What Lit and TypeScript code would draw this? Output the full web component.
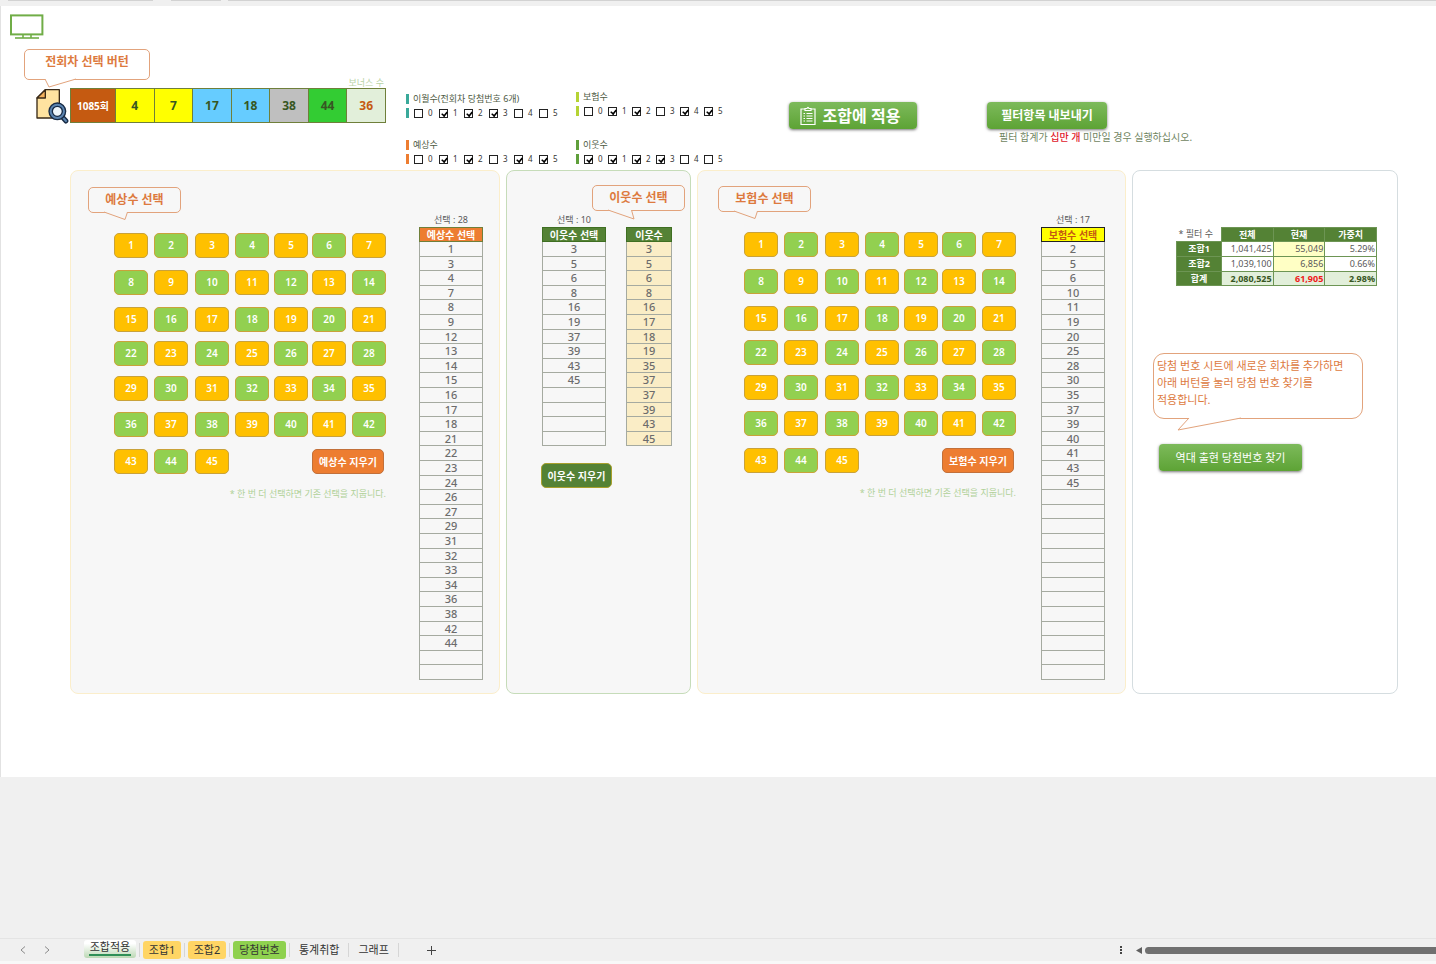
import { LitElement, html, svg, css, nothing } from "lit";
import { customElement, state } from "lit/decorators.js";
import { classMap } from "lit/directives/class-map.js";

type CheckGroup = { id: string; label: string; tone: string; on: number[] };

const DRAW = [
  { n: 4, tone: "yellow" },
  { n: 7, tone: "yellow" },
  { n: 17, tone: "blue" },
  { n: 18, tone: "blue" },
  { n: 38, tone: "gray" },
  { n: 44, tone: "green" },
  { n: 36, tone: "bonus" },
];

const CHECK_COLUMNS: CheckGroup[][] = [
  [
    { id: "carry", label: "이월수(전회차 당첨번호 6개)", tone: "teal", on: [1, 2, 3] },
    { id: "expect", label: "예상수", tone: "orange", on: [1, 2, 4, 5] },
  ],
  [
    { id: "insure", label: "보험수", tone: "lime", on: [1, 2, 4, 5] },
    { id: "near", label: "이웃수", tone: "leaf", on: [0, 1, 2, 3] },
  ],
];

const NEIGHBOURS = [3, 5, 6, 8, 16, 17, 18, 19, 35, 37, 37, 39, 43, 45];
const BALLS = Array.from({ length: 45 }, (_, i) => i + 1);

@customElement("app-root")
export class AppRoot extends LitElement {
  @state() private expected: number[] = [
    1, 3, 4, 7, 8, 9, 12, 13, 14, 15, 16, 17, 18, 21, 22, 23, 24, 26, 27, 29, 31, 32, 33, 34, 36, 38, 42, 44,
  ];
  @state() private insured: number[] = [2, 5, 6, 10, 11, 19, 20, 25, 28, 30, 35, 37, 39, 40, 41, 43, 45];
  @state() private near: number[] = [3, 5, 6, 8, 16, 19, 37, 39, 43, 45];

  static styles = css`
    :host {
      display: flex;
      flex-direction: column;
      min-height: 100vh;
      background: #f0f0f0;
      font-family: "Noto Sans", "Noto Sans CJK KR", sans-serif;
      font-size: 10px;
      line-height: 14px;
      color: #595959;
    }
    * {
      box-sizing: border-box;
    }
    button {
      font: inherit;
      padding: 0;
      cursor: pointer;
    }
    table {
      border-collapse: collapse;
      table-layout: fixed;
    }
    th,
    td {
      padding: 0;
    }
    .strip {
      display: flex;
      gap: 7px;
      height: 6px;
      padding-left: 8px;
      background: #f0f0f0;
    }
    .strip span {
      height: 1px;
      background: #d2d2d2;
    }
    .strip .s1 {
      width: 145px;
      margin-right: 11px;
    }
    .strip .s2 {
      width: 50px;
    }
    .strip .s3 {
      flex: 1;
    }
    .sheet {
      min-height: 771px;
      padding-top: 8px;
      background: #fff;
      border-left: 1px solid #e2e2e2;
    }
    .monitor {
      display: block;
      margin-left: 8px;
    }
    .head {
      display: flex;
      align-items: stretch;
      height: 131px;
      padding-left: 23px;
    }
    .last {
      width: 382px;
      padding-top: 10px;
    }
    .lastTop {
      display: flex;
      justify-content: space-between;
      align-items: flex-end;
      width: 360px;
      height: 39px;
    }
    .bonusLabel {
      font-size: 9px;
      line-height: 10px;
      color: #b9d3a6;
    }
    .lastRow {
      display: flex;
      align-items: flex-start;
      padding-left: 12px;
    }
    .search {
      border: 0;
      background: none;
      width: 34px;
      height: 36px;
    }
    .search svg {
      display: block;
    }
    .draw {
      width: 316px;
      height: 35px;
    }
    .draw th,
    .draw td {
      border: 1px solid #6f7f3a;
      text-align: center;
      font-weight: 700;
      color: #375623;
      font-size: 12px;
    }
    .draw th {
      width: 45px;
      background: #c55a11;
      color: #fff;
      font-size: 10px;
    }
    .draw .yellow {
      background: #ffff00;
    }
    .draw .blue {
      background: #66ccff;
    }
    .draw .gray {
      background: #bfbfbf;
    }
    .draw .green {
      background: #33cc33;
    }
    .draw .bonus {
      background: #e2efda;
      color: #c55a11;
    }

    .callout {
      position: relative;
      width: 93px;
      height: 26px;
      border: 1px solid #e2a37c;
      border-radius: 5px;
      background: var(--fill, #f7f7f7);
      color: #dd7a3e;
      font-size: 12px;
      font-weight: 700;
      line-height: 24px;
      text-align: center;
    }
    .callout.wide {
      --fill: #fff;
      width: 126px;
      height: 31px;
      margin-bottom: 8px;
    }
    .tail {
      position: absolute;
      top: 100%;
      left: 15px;
      overflow: visible;
    }
    .tail path {
      fill: var(--fill, #f7f7f7);
      stroke: #e2a37c;
    }

    .checks {
      display: flex;
      flex-direction: column;
      justify-content: flex-end;
      padding-bottom: 6px;
    }
    .checks.first {
      width: 170px;
      gap: 22px;
    }
    .checks.second {
      width: 213px;
      gap: 24px;
    }
    fieldset {
      border: 0;
      margin: 0;
      padding: 0;
      min-width: 0;
      display: flex;
      flex-direction: column;
      gap: 4px;
    }
    .line {
      display: flex;
      align-items: center;
      height: 10px;
      padding-left: 4px;
      border-left: 3px solid var(--tone);
      font-size: 9px;
      line-height: 10px;
      white-space: nowrap;
      color: #4d5a43;
    }
    .teal {
      --tone: #3aa99a;
    }
    .orange {
      --tone: #ed7d31;
    }
    .lime {
      --tone: #b5d334;
    }
    .leaf {
      --tone: #5f9f3b;
    }
    .boxes {
      padding-left: 5px;
      color: #333;
    }
    .boxes label {
      display: flex;
      align-items: center;
      gap: 5px;
      width: 25px;
      font-size: 8px;
    }
    .second .boxes label {
      width: 24px;
    }
    .boxes input {
      appearance: none;
      position: relative;
      flex: none;
      width: 9px;
      height: 9px;
      margin: 0;
      border: 1px solid #222;
      background: #fff;
    }
    .boxes input:checked::after {
      content: "";
      position: absolute;
      left: 2px;
      top: 0;
      width: 3px;
      height: 5px;
      border: solid #000;
      border-width: 0 2px 2px 0;
      transform: rotate(40deg) scale(0.8);
    }
    .action {
      display: flex;
      align-items: center;
      justify-content: center;
      border: 0;
      border-radius: 4px;
      background: linear-gradient(#7dba5b, #5da335);
      box-shadow: 0 1px 3px rgba(0, 0, 0, 0.55);
      color: #fff;
      height: 27px;
      white-space: nowrap;
    }
    .apply {
      gap: 7px;
      width: 128px;
      padding-right: 6px;
      font-size: 16px;
      font-weight: 700;
    }
    .applyBox {
      padding-top: 63px;
      margin-right: 70px;
    }
    .exportBox {
      padding-top: 63px;
    }
    .export {
      width: 120px;
      font-size: 12px;
      font-weight: 700;
    }
    .hint {
      margin: 1px 0 0 12px;
      font-size: 10px;
      color: #70855f;
      white-space: nowrap;
    }
    .hint b {
      font-weight: 500;
      color: #e0202c;
    }

    .panels {
      display: grid;
      grid-template-columns: 430fr 185fr 429fr 266fr;
      gap: 6px;
      margin: 0 38px 0 69px;
    }
    .panel {
      display: flex;
      border: 1px solid #fbeecb;
      border-radius: 8px;
      background: #f7f7f7;
      padding-bottom: 13px;
    }
    .panel.pick {
      justify-content: space-between;
      padding-right: 16px;
    }
    .panel.pick.alt {
      padding-left: 3px;
      padding-right: 20px;
    }
    .panel.nearby {
      flex-direction: column;
      border-color: #c6dcb9;
    }
    .panel.info {
      flex-direction: column;
      background: #fff;
      border-color: #d5dde0;
    }
    .pickLeft {
      padding: 16px 0 0 17px;
    }
    .alt .pickLeft {
      padding-top: 15px;
    }
    .balls {
      display: grid;
      grid-template-columns: 40px 41px 40px 39px 38px 40px 34px;
      grid-template-rows: 37px 37px 34px 35px 36px 37px 25px;
      margin: 20px 0 0 26px;
    }
    .ball {
      width: 34px;
      height: 25px;
      border: 1px solid #c9a23a;
      border-radius: 5px;
      background: #ffc000;
      color: #fff;
      font-weight: 600;
      line-height: 23px;
    }
    .ball.even {
      background: #92d050;
    }
    .clear {
      width: 72px;
      height: 25px;
      border: 1px solid #c2703a;
      border-radius: 5px;
      background: #ed7d31;
      color: #fff;
      font-size: 10px;
      font-weight: 700;
      white-space: nowrap;
    }
    .balls .clear {
      grid-column: 6 / 8;
    }
    .note {
      margin: 13px 0 0;
      text-align: right;
      font-size: 9px;
      color: #b0d197;
    }
    .listBox {
      padding-top: 42px;
    }
    .count {
      text-align: center;
      font-size: 9px;
    }
    .list {
      width: 64px;
      color: #6c6c6c;
      font-size: 11px;
      font-weight: 500;
      line-height: 12px;
      text-align: center;
    }
    .list td {
      border: 1px solid #a5aaa0;
      height: 15px;
    }
    .list tbody tr:nth-child(5n + 2) td,
    .list tbody tr:nth-child(5n + 4) td {
      height: 14px;
    }
    .list th {
      height: 14px;
      border: 1px solid #6f7f3a;
      background: #ed7d31;
      color: #fff;
      font-size: 10px;
      font-weight: 700;
      white-space: nowrap;
    }
    .list.green th {
      border-color: #3f6f22;
      background: #548235;
    }
    .list.yellow th {
      border-color: #222;
      background: #ffff00;
      color: #c55a11;
    }
    .list.sand {
      width: 46px;
    }
    .list.sand td {
      background: #faedc6;
    }
    .nearTop {
      display: flex;
      justify-content: flex-end;
      height: 28px;
      padding-right: 5px;
      margin-top: 14px;
    }
    .nearLists {
      display: flex;
      align-items: flex-end;
      gap: 20px;
      padding-left: 35px;
    }
    .nearby .clear {
      width: 71px;
      margin: 17px 0 0 34px;
      border-color: #a8a02c;
      background: #548235;
    }

    .stats {
      width: 201px;
      margin: 56px 0 0 43px;
      font-size: 9px;
      line-height: 12px;
      text-align: right;
    }
    .stats th,
    .stats td {
      height: 15px;
      border: 1px solid #6d9554;
    }
    .stats thead th,
    .stats thead td,
    .stats .sum th,
    .stats .sum td {
      height: 14px;
    }
    .stats td {
      padding-right: 1px;
    }
    .stats th {
      background: #548235;
      color: #fff;
      text-align: center;
      font-weight: 700;
    }
    .stats .corner {
      width: 45px;
      border: 0;
      background: none;
      color: #595959;
      font-weight: 400;
      padding-left: 2px;
      text-align: left;
    }
    .stats .now {
      background: #ffffc5;
    }
    .stats .sum td {
      background: #e2efda;
      color: #375623;
      font-weight: 700;
    }
    .stats .sum .now {
      color: #f01818;
    }
    .callout.guide {
      --fill: #fff;
      width: 210px;
      height: 66px;
      margin: 67px 0 0 20px;
      padding: 3px 0 0 3px;
      border-radius: 11px;
      font-size: 11px;
      font-weight: 400;
      line-height: 17px;
      text-align: left;
    }
    .guide .tail {
      left: 24px;
    }
    .find {
      width: 143px;
      margin: 25px 0 0 26px;
      font-size: 11px;
    }

    .gap {
      flex: 1;
    }
    .tabs {
      display: flex;
      align-items: center;
      height: 26px;
      padding-left: 14px;
      border-top: 1px solid #e4e4e4;
      border-bottom: 3px solid #f8f8f8;
      font-size: 11px;
      color: #333;
    }
    .tabs button {
      border: 0;
      background: none;
      color: inherit;
      height: 18px;
      line-height: 18px;
      border-radius: 3px;
      white-space: nowrap;
    }
    .tabs .nav {
      width: 18px;
      margin-right: 6px;
    }
    .tabs svg {
      display: block;
      margin: auto;
    }
    .tabs .current {
      width: 52px;
      margin: 0 0 2px 22px;
      background: linear-gradient(#ffffff 20%, #bcd8b4);
    }
    .current span {
      display: block;
      width: 42px;
      height: 16px;
      margin: 0 auto 2px;
      line-height: 14px;
      border-bottom: 2px solid #2f8f57;
    }
    .tabs .gold {
      width: 38px;
      background: #ffd564;
    }
    .tabs .lawn {
      width: 53px;
      background: #8fd14f;
    }
    .tabs .plain {
      padding: 0 6px;
    }
    .tabs i {
      width: 1px;
      height: 14px;
      margin: 0 3px;
      background: #d6d6d6;
    }
    .tabs .add {
      width: 20px;
      margin-left: 20px;
    }
    .scroll {
      display: flex;
      align-items: center;
      gap: 3px;
      width: 317px;
      margin-left: auto;
    }
    .scroll .dots {
      margin: 0 10px 0 0;
    }
    .scroll .arrow {
      margin: 0;
    }
    .thumb {
      flex: 1;
      height: 7px;
      border-radius: 4px 0 0 4px;
      background: #707070;
    }
  `;

  private toggle(list: number[], n: number): number[] {
    return list.includes(n) ? list.filter((v) => v !== n) : [...list, n].sort((a, b) => a - b);
  }

  private tail(d: string) {
    return html`<svg class="tail" width="60" height="14" aria-hidden="true">${svg`<path d=${d} />`}</svg>`;
  }

  private list(title: string, values: number[], rows: number, tone: string) {
    return html`<table class="list ${tone}">
      <thead>
        <tr><th scope="col">${title}</th></tr>
      </thead>
      <tbody>
        ${Array.from({ length: rows }, (_, i) => html`<tr><td>${values[i] ?? nothing}</td></tr>`)}
      </tbody>
    </table>`;
  }

  private checks(g: CheckGroup) {
    return html`<fieldset class=${g.tone} aria-labelledby=${g.id}>
      <div class="line" id=${g.id}>${g.label}</div>
      <div class="line boxes">
        ${[0, 1, 2, 3, 4, 5].map(
          (n) => html`<label><input type="checkbox" ?checked=${g.on.includes(n)} />${n}</label>`
        )}
      </div>
    </fieldset>`;
  }

  private picker(
    name: string,
    alt: boolean,
    chosen: number[],
    tone: string,
    update: (next: number[]) => void
  ) {
    return html`<section class=${classMap({ panel: true, pick: true, alt })}>
      <div class="pickLeft">
        <div class="callout">${name} 선택${this.tail("M0 0 L21 7.5 L23.5 0")}</div>
        <div class="balls">
          ${BALLS.map(
            (n) => html`<button
              class=${classMap({ ball: true, even: n % 2 === 0 })}
              @click=${() => update(this.toggle(chosen, n))}
            >${n}</button>`
          )}
          <button class="clear" @click=${() => update([])}>${name} 지우기</button>
        </div>
        <p class="note">* 한 번 더 선택하면 기존 선택을 지웁니다.</p>
      </div>
      <div class="listBox">
        <div class="count">선택 : ${chosen.length}</div>
        ${this.list(`${name} 선택`, chosen, 30, tone)}
      </div>
    </section>`;
  }

  render() {
    return html`
      <div class="strip"><span class="s1"></span><span class="s2"></span><span class="s3"></span></div>
      <main class="sheet">
        <svg class="monitor" width="35" height="25" fill="none" stroke="#70ad47" stroke-width="2" aria-hidden="true">
          <rect x="2" y="1.4" width="31.4" height="19" />
          <path d="M14 20.5V24M22 20.5V24" stroke-width="1.6" />
          <path d="M6 24H30" stroke-width="1.6" />
        </svg>
        <header class="head">
          <div class="last">
            <div class="lastTop">
              <div class="callout wide">전회차 선택 버턴${this.tail("M5 0 L9 8 L36 0")}</div>
              <span class="bonusLabel">보너스 수</span>
            </div>
            <div class="lastRow">
              <button class="search" aria-label="전회차 선택">
                <svg width="34" height="37" viewBox="0 0 102 111" stroke="#3a2a17" stroke-width="4" stroke-linejoin="round">
                  <path d="M28 5H70V90H3V30Z" fill="#ffe3a0" />
                  <path d="M28 5V30H3Z" fill="#f3b15d" />
                  <path d="M80 88L90 99" stroke="#182b45" stroke-width="15" stroke-linecap="round" />
                  <path d="M82 90L90 99" stroke="#5b84b0" stroke-width="6" stroke-linecap="round" />
                  <circle cx="64" cy="70" r="20" fill="#eef6fc" stroke="#182b45" stroke-width="14" />
                  <circle cx="64" cy="70" r="20" fill="none" stroke="#5b84b0" stroke-width="6" />
                </svg>
              </button>
              <table class="draw">
                <tr>
                  <th scope="row">1085회</th>
                  ${DRAW.map((d) => html`<td class=${d.tone}>${d.n}</td>`)}
                </tr>
              </table>
            </div>
          </div>
          <div class="checks first">${CHECK_COLUMNS[0].map((g) => this.checks(g))}</div>
          <div class="checks second">${CHECK_COLUMNS[1].map((g) => this.checks(g))}</div>
          <div class="applyBox">
            <button class="action apply">
              <svg width="16" height="20" viewBox="0 0 16 20" fill="none" stroke="#fff" stroke-width="1.2" aria-hidden="true">
                <path d="M5 3H1V18.5H15V3H11" />
                <path d="M5 4.5V2.5H7Q8 0 9 2.5H11V4.5Z" />
                <path d="M3.5 7.5H5M6.5 7.5H12.5M3.5 10H5M6.5 10H12.5M3.5 12.5H5M6.5 12.5H12.5M3.5 15H5M6.5 15H12.5" />
              </svg>
              조합에 적용
            </button>
          </div>
          <div class="exportBox">
            <button class="action export">필터항목 내보내기</button>
            <p class="hint">필터 합계가 <b>십만 개</b> 미만일 경우 실행하십시오.</p>
          </div>
        </header>

        <div class="panels">
          ${this.picker("예상수", false, this.expected, "", (v) => (this.expected = v))}
          <section class="panel nearby">
            <div class="nearTop">
              <div class="callout">이웃수 선택${this.tail("M0 0 L26 9 L23.5 0")}</div>
            </div>
            <div class="nearLists">
              <div>
                <div class="count">선택 : ${this.near.length}</div>
                ${this.list("이웃수 선택", this.near, 14, "green")}
              </div>
              ${this.list("이웃수", NEIGHBOURS, 14, "green sand")}
            </div>
            <button class="clear" @click=${() => (this.near = [])}>이웃수 지우기</button>
          </section>
          ${this.picker("보험수", true, this.insured, "yellow", (v) => (this.insured = v))}
          <section class="panel info">
            <table class="stats">
              <thead>
                <tr>
                  <td class="corner">* 필터 수</td>
                  <th scope="col">전체</th>
                  <th scope="col">현재</th>
                  <th scope="col">가중치</th>
                </tr>
              </thead>
              <tbody>
                <tr><th scope="row">조합1</th><td>1,041,425</td><td class="now">55,049</td><td>5.29%</td></tr>
                <tr><th scope="row">조합2</th><td>1,039,100</td><td class="now">6,856</td><td>0.66%</td></tr>
                <tr class="sum"><th scope="row">합계</th><td>2,080,525</td><td class="now">61,905</td><td>2.98%</td></tr>
              </tbody>
            </table>
            <div class="callout guide">
              당첨 번호 시트에 새로운 회차를 추가하면<br />아래 버턴을 눌러 당첨 번호 찾기를<br />적용합니다.
              ${this.tail("M11 0 L0 12 L63 0")}
            </div>
            <button class="action find">역대 출현 당첨번호 찾기</button>
          </section>
        </div>
      </main>
      <div class="gap"></div>
      <nav class="tabs">
        <button class="nav" aria-label="이전 시트">
          <svg width="6" height="8" fill="none" stroke="#8a8a8a"><path d="M5 0.5L1 4L5 7.5" /></svg>
        </button>
        <button class="nav" aria-label="다음 시트">
          <svg width="6" height="8" fill="none" stroke="#8a8a8a"><path d="M1 0.5L5 4L1 7.5" /></svg>
        </button>
        <button class="current"><span>조합적용</span></button>
        <i></i><button class="gold">조합1</button>
        <i></i><button class="gold">조합2</button>
        <i></i><button class="lawn">당첨번호</button>
        <i></i><button class="plain">통계취합</button>
        <i></i><button class="plain">그래프</button>
        <i></i>
        <button class="add" aria-label="새 시트">
          <svg width="9" height="9" stroke="#444"><path d="M4.5 0V9M0 4.5H9" /></svg>
        </button>
        <div class="scroll">
          <svg class="dots" width="4" height="9" fill="#444" aria-hidden="true">
            <rect x="1" y="0" width="2" height="2" /><rect x="1" y="3" width="2" height="2" /><rect x="1" y="6" width="2" height="2" />
          </svg>
          <svg class="arrow" width="6" height="7" fill="#606060" aria-hidden="true"><path d="M6 0V7L0 3.5Z" /></svg>
          <div class="thumb"></div>
        </div>
      </nav>
    `;
  }
}
